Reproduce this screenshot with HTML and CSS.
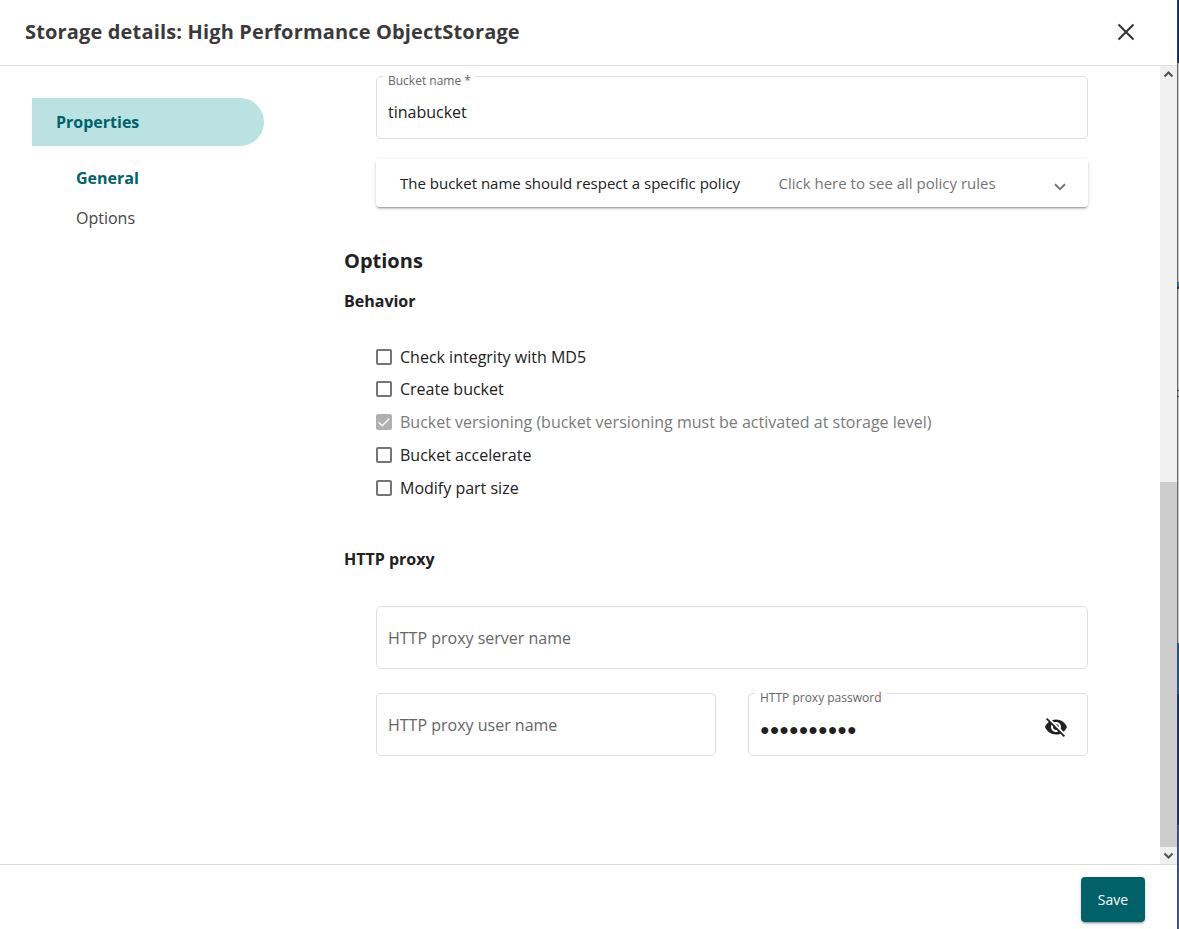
FILE: index.html
```html
<!DOCTYPE html>
<html lang="en">
<head>
<meta charset="utf-8">
<title>Storage details</title>
<link rel="stylesheet" href="styles.css">
</head>
<body>
<div class="window">
  <div class="dialog">
    <header class="header">
      <h1 class="title">Storage details: High Performance ObjectStorage</h1>
      <svg class="close" width="24" height="24" viewBox="0 0 24 24"><path d="M4.5 4.5l15 15M19.5 4.5l-15 15" fill="none" stroke="#333" stroke-width="2"/></svg>
    </header>
    <div class="body">
      <nav class="nav">
        <div class="nav-main">Properties</div>
        <div class="nav-item active">General</div>
        <div class="nav-item">Options</div>
      </nav>
      <main class="content">
        <div class="indent">
          <div class="field"><span class="label">Bucket name *</span><span class="value">tinabucket</span></div>
          <div class="panel">
            <span class="panel-title">The bucket name should respect a specific policy</span>
            <span class="panel-hint">Click here to see all policy rules</span>
            <svg class="chevron" width="12" height="8" viewBox="0 0 12 8"><path d="M1 1.2l5 5 5-5" fill="none" stroke="#757575" stroke-width="2"/></svg>
          </div>
        </div>
        <h2 class="section">Options</h2>
        <h3 class="subsection">Behavior</h3>
        <div class="checks">
          <div class="check"><span class="box"></span><span>Check integrity with MD5</span></div>
          <div class="check"><span class="box"></span><span>Create bucket</span></div>
          <div class="check disabled"><span class="box"><svg width="16" height="16" viewBox="0 0 16 16"><path d="M2.6 8.2l3.6 3.5 7.2-7.3" fill="none" stroke="#fafafa" stroke-width="1.4"/></svg></span><span>Bucket versioning (bucket versioning must be activated at storage level)</span></div>
          <div class="check"><span class="box"></span><span>Bucket accelerate</span></div>
          <div class="check"><span class="box"></span><span>Modify part size</span></div>
        </div>
        <h3 class="subsection proxy">HTTP proxy</h3>
        <div class="indent proxy-fields">
          <div class="field"><span class="placeholder">HTTP proxy server name</span></div>
          <div class="field-row">
            <div class="field"><span class="placeholder">HTTP proxy user name</span></div>
            <div class="field"><span class="label">HTTP proxy password</span>
              <span class="password">●●●●●●●●●●</span>
              <svg class="eye" width="24" height="24" viewBox="0 0 24 24"><path fill="#212121" d="M12 7c2.76 0 5 2.24 5 5 0 .65-.13 1.26-.36 1.83l2.92 2.92c1.51-1.26 2.7-2.89 3.43-4.75-1.73-4.39-6-7.5-11-7.5-1.4 0-2.74.25-3.98.7l2.16 2.16C10.74 7.13 11.35 7 12 7zM2 4.27l2.28 2.28.46.46C3.08 8.3 1.78 10.02 1 12c1.73 4.39 6 7.5 11 7.5 1.55 0 3.03-.3 4.38-.84l.42.42L19.73 22 21 20.73 3.27 3 2 4.27zM7.53 9.8l1.55 1.55c-.05.21-.08.43-.08.65 0 1.66 1.34 3 3 3 .22 0 .44-.03.65-.08l1.55 1.55c-.67.33-1.41.53-2.2.53-2.76 0-5-2.24-5-5 0-.79.2-1.53.53-2.2zm4.31-.78l3.15 3.15.02-.16c0-1.66-1.34-3-3-3l-.17.01z"/></svg>
            </div>
          </div>
        </div>
      </main>
      <div class="scrollbar">
        <svg width="17" height="17" viewBox="0 0 17 17"><path d="M4.5 10.5l4-4 4 4" fill="none" stroke="#505050" stroke-width="2"/></svg>
        <div class="thumb"></div>
        <svg width="17" height="17" viewBox="0 0 17 17"><path d="M4.5 6.5l4 4 4-4" fill="none" stroke="#505050" stroke-width="2"/></svg>
      </div>
    </div>
    <footer class="footer"><button class="save">Save</button></footer>
  </div>
  <div class="edge"></div>
</div>
</body>
</html>
```
FILE: styles.css
```css
* { box-sizing: border-box; }
body { margin: 0; font: 16px/24px "Open Sans", sans-serif; color: #212121; background: #fff; }
h1, h2, h3 { margin: 0; }
svg { display: block; flex: none; }
.window { display: flex; width: 1179px; height: 929px; overflow: hidden; }
.dialog { width: 1177px; display: flex; flex-direction: column; }
.edge { width: 2px; background: linear-gradient(#002b7d 0 63px, #c5c5c5 63px 282px, #397cae 282px 287px, #332016 287px 289px, #c5c5c5 289px 390px, #302820 390px 391px, #c5c5c5 391px 396px, #302820 396px 397px, #c5c5c5 397px 643px, #24549b 643px 694px, #0c2a69 694px 825px, #3d5b9c 825px); border-left: 1px solid rgba(70, 70, 70, .7); }
.header { height: 66px; flex: none; padding: 0 39px 2px 25px; border-bottom: 1px solid #dcdcdc; display: flex; align-items: center; justify-content: space-between; }
.title { font-size: 20px; line-height: 28px; font-weight: 700; letter-spacing: .155px; color: #3a3a3a; }
.body { flex: 1; display: flex; min-height: 0; }
.nav { width: 344px; padding: 32px 80px 0 32px; color: #454545; }
.nav-main { height: 48px; padding-left: 24px; margin-bottom: 12px; line-height: 48px; border-radius: 0 24px 24px 0; background: #bae2e1; color: #00626a; font-weight: 700; }
.nav-item { height: 40px; line-height: 40px; padding-left: 44px; }
.nav-item.active { color: #00626a; font-weight: 700; }
.content { flex: 1; padding: 10px 72px 0 0; }
.indent { padding-left: 32px; }
.field { position: relative; height: 63px; border: 1px solid #dfdfdf; border-radius: 5px; padding: 0 19px 0 11px; display: flex; align-items: center; justify-content: space-between; }
.label { position: absolute; left: 6px; top: -5px; padding: 0 4px 0 5px; background: #fff; font-size: 12px; line-height: 18px; color: #666; }
.value { padding-top: 8px; }
.placeholder { color: #666; }
.panel { margin-top: 20px; height: 48px; border-radius: 4px; padding: 0 22px 0 24px; display: flex; align-items: center; font-size: 15px; box-shadow: 0 3px 1px -2px rgba(0,0,0,.2), 0 2px 2px rgba(0,0,0,.14), 0 1px 5px rgba(0,0,0,.12); }
.panel-title { width: 378.5px; }
.panel-hint { flex: 1; color: #757575; }
.chevron { margin-top: 8px; }
.section { margin-top: 40px; font-size: 20px; line-height: 28px; font-weight: 700; }
.subsection { margin-top: 14px; font-size: 16px; line-height: 24px; font-weight: 700; }
.checks { padding: 32px 0 0 32px; display: grid; grid-template-rows: 32px 33px 33px 33px 32px; }
.check { display: flex; gap: 8px; align-items: center; height: 24px; }
.box { width: 16px; height: 16px; border: 2px solid #757575; border-radius: 2px; }
.disabled { color: #7a7a7a; }
.disabled .box { border: 0; background: #b0b0b0; }
.proxy { margin-top: 39px; }
.proxy-fields { margin-top: 35px; display: grid; gap: 24px; }
.field-row { display: grid; grid-template-columns: 1fr 1fr; gap: 32px; }
.password { padding-top: 10px; font-family: "Liberation Sans", sans-serif; }
.eye { margin-top: 4px; }
.scrollbar { width: 17px; background: #f0f0f0; display: flex; flex-direction: column; }
.thumb { height: 365px; margin-top: auto; background: #cdcdcd; }
.footer { height: 65px; flex: none; border-top: 1px solid #dcdcdc; padding: 12px 32px 0; display: flex; justify-content: flex-end; }
.save { width: 64px; height: 45px; padding: 0; border: 0; border-radius: 4px; background: #006168; color: #fff; font: 14px/20px "Open Sans", sans-serif; box-shadow: 0 3px 1px -2px rgba(0,0,0,.2), 0 2px 2px rgba(0,0,0,.14), 0 1px 5px rgba(0,0,0,.12); }
```
